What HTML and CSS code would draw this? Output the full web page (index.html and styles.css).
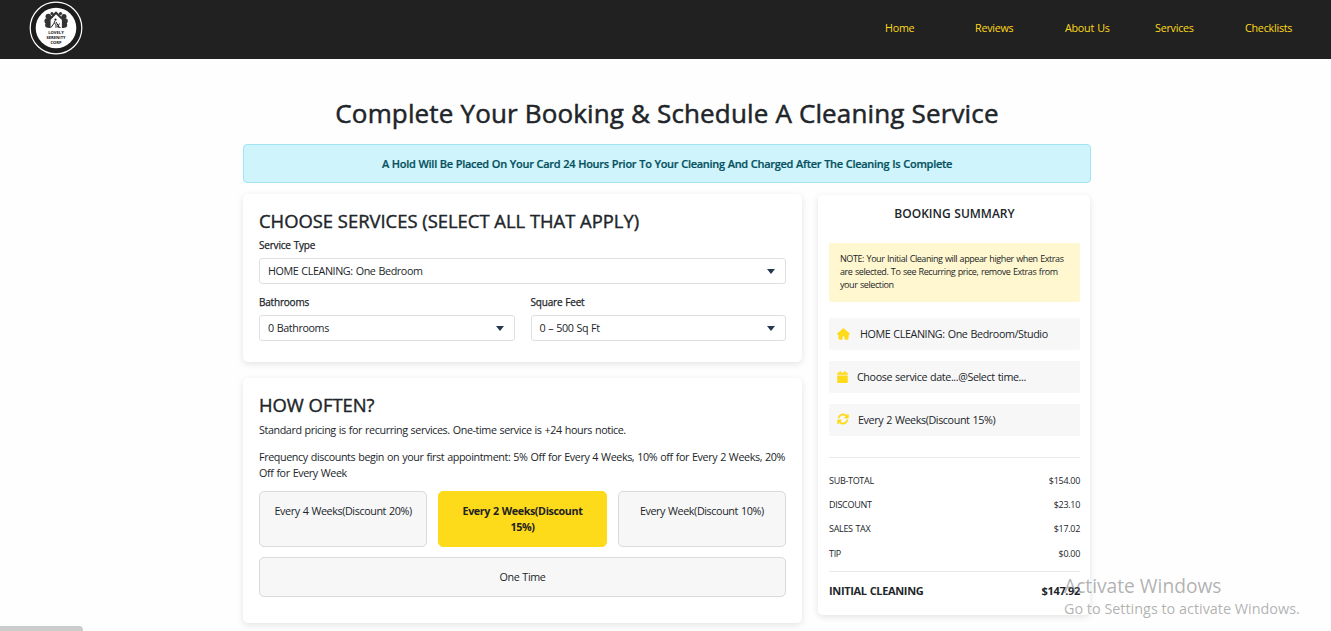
FILE: index.html
```html
<!DOCTYPE html>
<html lang="en">
<head>
<meta charset="utf-8">
<title>Complete Your Booking</title>
<link rel="stylesheet" href="styles.css">
</head>
<body>
<header class="topbar">
  <a class="logo" href="#" aria-label="Lovely Serenity Corp">
    <svg width="54" height="54" viewBox="0 0 54 54">
      <circle cx="27" cy="27" r="25.8" fill="#1c1c1c" stroke="#fff" stroke-width="1.200"/>
      <circle cx="27" cy="27" r="20.3" fill="#fff"/>
      <g fill="#333">
        <circle cx="19.300" cy="15.500" r="2.800"/><circle cx="18.200" cy="20" r="2.800"/><circle cx="18.800" cy="24" r="2.700"/>
        <circle cx="35" cy="15.500" r="2.500"/><circle cx="36" cy="20" r="2.800"/><circle cx="35.500" cy="24" r="2.700"/>
        <circle cx="23" cy="12.500" r="1.600"/><circle cx="31.500" cy="12.500" r="1.600"/>
      </g>
      <path d="M20.500 27v-8.500L27 11.800l7 6.700V27" fill="#fff" stroke="#333" stroke-width="2.200"/>
      <path d="M26 19.800l-1.300 3-2.700 3.700M25.500 22l1.500 1.800v3M27 21l3 5M30.500 22.500l-2 3.500 3 .5" fill="none" stroke="#222" stroke-width="1"/>
      <circle cx="26.500" cy="18.700" r="1.100" fill="#222"/>
      <g class="logo-text" text-anchor="middle">
        <text x="27" y="32.800">LOVELY</text><text x="27" y="38">SERENITY</text><text x="27" y="43.200">CORP</text>
      </g>
    </svg>
  </a>
  <nav class="nav">
    <a href="#">Home</a><a href="#">Reviews</a><a href="#">About Us</a><a href="#">Services</a><a href="#">Checklists</a>
  </nav>
</header>
<main class="page">
  <h1 class="page-title">Complete Your Booking &amp; Schedule A Cleaning Service</h1>
  <div class="alert">A Hold Will Be Placed On Your Card 24 Hours Prior To Your Cleaning And Charged After The Cleaning Is Complete</div>
  <div class="columns">
    <div class="form">
      <section class="card services">
        <h2 class="card-title">CHOOSE SERVICES (SELECT ALL THAT APPLY)</h2>
        <div class="field">
          <span class="label">Service Type</span>
          <div class="select"><span>HOME CLEANING: One Bedroom</span><i class="caret"></i></div>
        </div>
        <div class="field-row">
          <div class="field">
            <span class="label">Bathrooms</span>
            <div class="select"><span>0 Bathrooms</span><i class="caret"></i></div>
          </div>
          <div class="field">
            <span class="label">Square Feet</span>
            <div class="select"><span>0 – 500 Sq Ft</span><i class="caret"></i></div>
          </div>
        </div>
      </section>
      <section class="card often">
        <h2 class="card-title">HOW OFTEN?</h2>
        <p class="text">Standard pricing is for recurring services. One-time service is +24 hours notice.</p>
        <p class="text freq">Frequency discounts begin on your first appointment: 5% Off for Every 4 Weeks, 10% off for Every 2 Weeks, 20%<br>Off for Every Week</p>
        <div class="options">
          <button class="option">Every 4 Weeks(Discount 20%)</button>
          <button class="option active">Every 2 Weeks(Discount<br>15%)</button>
          <button class="option">Every Week(Discount 10%)</button>
          <button class="option wide">One Time</button>
        </div>
      </section>
    </div>
    <aside class="card summary">
      <h3 class="summary-title">BOOKING SUMMARY</h3>
      <div class="note">NOTE: Your Initial Cleaning will appear higher when Extras<br>are selected. To see Recurring price, remove Extras from<br>your selection</div>
      <div class="items">
        <div class="item home">
          <svg width="13" height="12" viewBox="0 0 576 512"><path fill="#fdda1a" d="M575.800 255.500c0 18-15 32.100-32 32.100h-32l.7 160.200c0 36-28 64.200-64 64.200H360c-18 0-32-14-32-32v-96c0-18-14-32-32-32h-16c-18 0-32 14-32 32v96c0 18-14 32-32 32h-88c-36 0-64-28-64-64V287.600H32c-18 0-32-14-32-32.100 0-9 3-17 10-24L266.400 8c7-7 15-8 22-8s15 2 21 7l255.400 224.500c8 7 12 15 11 24z"/></svg>
          <span>HOME CLEANING: One Bedroom/Studio</span>
        </div>
        <div class="item date">
          <svg width="11" height="12" viewBox="0 0 448 512"><path fill="#fdda1a" d="M96 32v32H48C21.500 64 0 85.500 0 112v48h448v-48c0-26.500-21.500-48-48-48h-48V32c0-42-64-42-64 0v32H160V32c0-42-64-42-64 0zM448 192H0v272c0 26.500 21.500 48 48 48h352c26.500 0 48-21.500 48-48V192z"/></svg>
          <span>Choose service date...@Select time...</span>
        </div>
        <div class="item repeat">
          <svg width="12" height="12" viewBox="0 0 512 512"><path fill="#fdda1a" stroke="#fdda1a" stroke-width="16" d="M105.100 202.600c7.700-21.800 20.200-42.300 37.800-59.800 62.500-62.500 163.800-62.500 226.300 0L386.300 160H352c-17.700 0-32 14.300-32 32s14.300 32 32 32h111.500c17.700 0 32-14.300 32-32V80c0-17.700-14.300-32-32-32s-32 14.300-32 32v35.200L414.400 97.600c-87.500-87.500-229.300-87.500-316.800 0C73.200 122 55.600 150.700 44.800 181.400c-14 40 46 61 60.300 21.200zM39 289.300c-14 4-22 15-22 31V432c0 17.700 14.300 32 32 32s32-14.300 32-32v-35.100l17.600 17.500c87.500 87.400 229.300 87.400 316.700 0 24.400-24.400 42.100-53.100 52.900-83.800 14-40-46-61-60.300-21.200-7.700 21.800-20.200 42.300-37.800 59.800-62.500 62.500-163.800 62.500-226.300 0L125.600 352H160c17.700 0 32-14.300 32-32s-14.300-32-32-32H48.400c-3.200 0-6.300.3-9.400 1.300z"/></svg>
          <span>Every 2 Weeks(Discount 15%)</span>
        </div>
      </div>
      <dl class="prices">
        <div class="price"><dt>SUB-TOTAL</dt><dd>$154.00</dd></div>
        <div class="price"><dt>DISCOUNT</dt><dd>$23.10</dd></div>
        <div class="price"><dt>SALES TAX</dt><dd>$17.02</dd></div>
        <div class="price"><dt>TIP</dt><dd>$0.00</dd></div>
      </dl>
      <div class="total"><span>INITIAL CLEANING</span><span>$147.92</span></div>
    </aside>
  </div>
</main>
<div class="watermark">
  <div class="watermark-title">Activate Windows</div>
  <div class="watermark-text">Go to Settings to activate Windows.</div>
</div>
<div class="status"></div>
</body>
</html>
```
FILE: styles.css
```css
* { box-sizing: border-box; margin: 0; }
body {
  height: 631px;
  overflow: hidden;
  background: #fefefe;
  color: #212529;
  font: 10.75px/16px "Open Sans", "Noto Sans", sans-serif;
  letter-spacing: -0.4px;
  word-spacing: 0.6px;
}
.topbar {
  display: flex;
  justify-content: space-between;
  height: 59px;
  padding: 1px 0 0 29px;
  background: #212121;
}
.logo { height: 54px; }
.logo svg { display: block; }
.logo-text { font: 700 4.1px "Open Sans", sans-serif; letter-spacing: 0; fill: #111; }
.nav { display: grid; grid-template-columns: repeat(5, 90px); width: 446px; padding-top: 19px; letter-spacing: -0.25px; }
.nav a { color: #fdda1a; text-decoration: none; white-space: nowrap; }
.page { width: 848px; margin-left: 243px; padding-top: 36px; }
.page-title {
  height: 36px;
  font-size: 26px;
  font-weight: 400;
  line-height: 36px;
  letter-spacing: 0.15px;
  word-spacing: 0;
  text-align: center;
  white-space: nowrap;
  -webkit-text-stroke: 0.5px #212529;
}
.alert {
  height: 39px;
  margin-top: 13px;
  border: 1px solid #9fe5f2;
  border-radius: 4px;
  background: #cff4fc;
  color: #055160;
  font-size: 11px;
  font-weight: 600;
  line-height: 38px;
  letter-spacing: -0.3px;
  word-spacing: 0.4px;
  text-align: center;
  white-space: nowrap;
  -webkit-text-stroke: 0.2px #055160;
}
.columns { display: grid; grid-template-columns: 559px 272px; gap: 16px; align-items: start; padding-top: 11px; }
.form { display: grid; grid-template-columns: 559px; gap: 16px; }
.card { border-radius: 5px; background: #fff; box-shadow: 0 2px 7px rgba(0, 0, 0, 0.11); }
.services { height: 168px; padding: 15px 16px; }
.often { height: 245px; padding: 15px 16px; }
.card-title {
  margin-bottom: 5px;
  font-size: 18.4px;
  font-weight: 400;
  line-height: 24px;
  letter-spacing: 0;
  word-spacing: 0;
  white-space: nowrap;
  -webkit-text-stroke: 0.4px #212529;
}
.field { flex: 1; }
.label { display: block; height: 16px; margin-bottom: 4px; font-size: 10px; line-height: 15px; letter-spacing: -0.2px; -webkit-text-stroke: 0.25px #212529; }
.select {
  display: flex;
  align-items: center;
  justify-content: space-between;
  height: 26px;
  padding: 0 10px 0 8px;
  border: 1px solid #dce0e3;
  border-radius: 3px;
}
.caret { border: 4.500px solid transparent; border-top: 5px solid #263850; border-bottom: 0; }
.field-row { display: flex; gap: 16px; margin-top: 11px; }
.text { white-space: nowrap; }
.freq { margin-top: 11px; }
.options { display: grid; grid-template-columns: repeat(3, 1fr); grid-template-rows: 56px 40px; gap: 10px 11px; margin-top: 10px; }
.option {
  display: flex;
  justify-content: center;
  padding: 11px 0;
  border: 1px solid #dadada;
  border-radius: 5px;
  background: #f7f7f7;
  color: #212529;
  font: inherit;
  letter-spacing: inherit;
  word-spacing: inherit;
  white-space: nowrap;
}
.active { border-color: #fdda1a; background: #fdda1a; color: #212121; font-weight: 700; }
.wide { grid-column: 1 / -1; }
.summary { height: 420px; margin-top: 1px; padding: 10px 10px 0 11px; }
.summary-title { font-size: 12px; font-weight: 600; line-height: 18px; letter-spacing: 0; text-align: center; }
.note { height: 59px; margin-top: 20px; padding: 9px 11px; border-radius: 2px; background: #fff7cf; font-size: 9px; line-height: 13px; letter-spacing: -0.42px; white-space: nowrap; }
.items { display: grid; gap: 11px; margin-top: 16px; }
.item { display: flex; align-items: center; height: 32px; padding-left: 8px; border-radius: 2px; background: #f7f7f7; white-space: nowrap; }
.home { gap: 10px; }
.date { gap: 9px; }
.repeat { gap: 9px; }
.repeat svg { margin-bottom: 2px; }
.prices { margin-top: 21px; padding: 15px 0 9px; border: solid #e9e9e9; border-width: 1px 0; font-size: 9px; letter-spacing: -0.3px; }
.price { display: flex; justify-content: space-between; height: 16px; margin-bottom: 8px; }
.price:last-child { margin: 9px 0 0; }
.price dd { margin: 0; }
.total { display: flex; justify-content: space-between; padding-top: 11px; font-size: 11px; font-weight: 700; letter-spacing: -0.35px; }
.watermark { position: absolute; left: 1064px; top: 574px; color: rgba(120, 120, 120, 0.58); letter-spacing: 0; word-spacing: 0; white-space: nowrap; }
.watermark-title { font-size: 19.2px; line-height: 24px; }
.watermark-text { margin-top: 2px; font-size: 14.4px; line-height: 18px; }
.status { position: absolute; left: 0; top: 626px; width: 83px; height: 5px; border-top-right-radius: 4px; background: #ccc; }
```
